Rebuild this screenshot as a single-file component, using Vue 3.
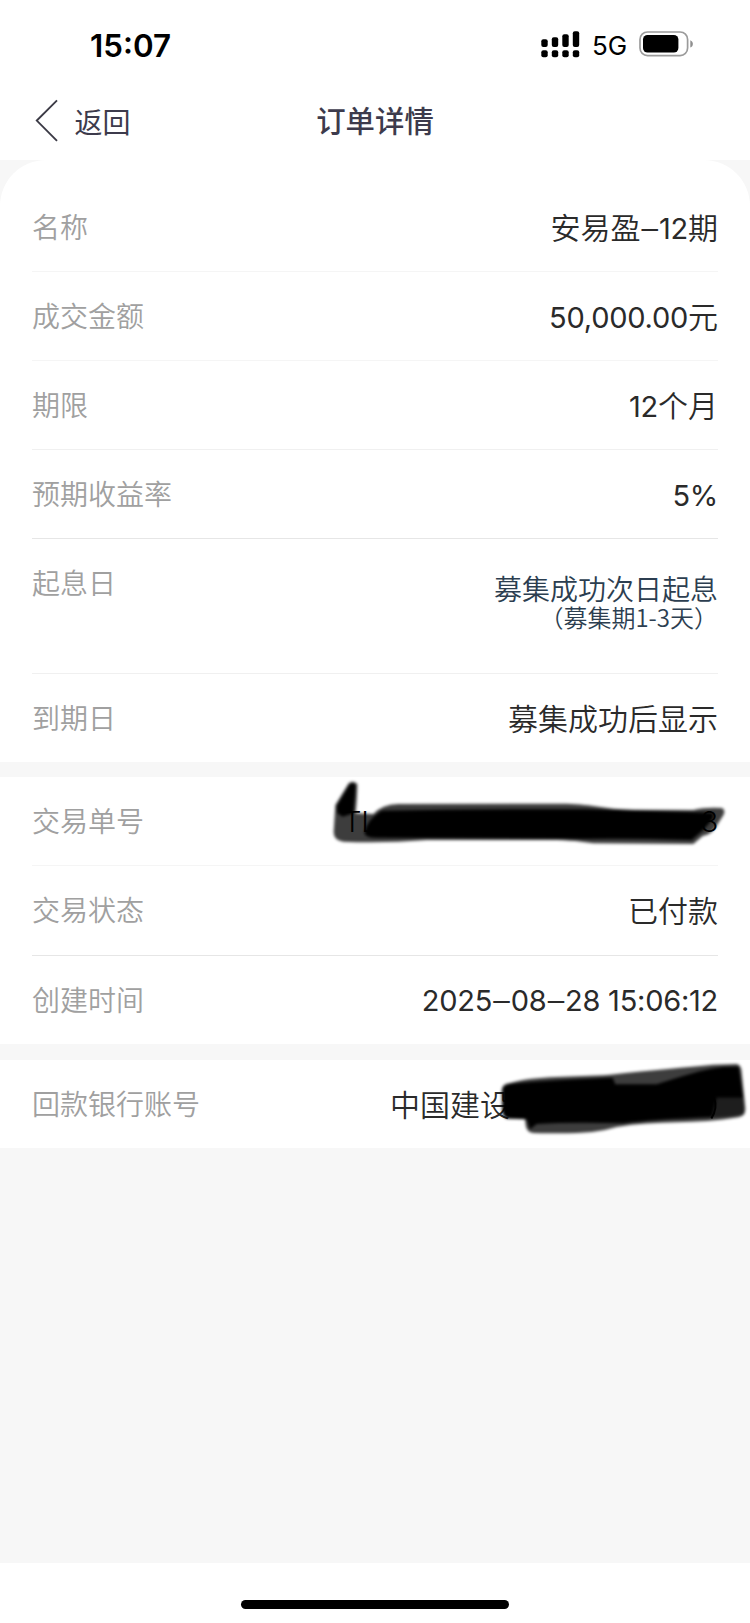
<script setup>
const product = [
  { label: '名称', parts: [{ t: '安易盈' }, { t: '–', n: true, dash: true }, { t: '12', n: true }, { t: '期' }], line: 'soft' },
  { label: '成交金额', parts: [{ t: '50,000.00', n: true }, { t: '元' }], line: 'soft' },
  { label: '期限', parts: [{ t: '12', n: true }, { t: '个月' }], line: 'mid' },
  { label: '预期收益率', parts: [{ t: '5%', n: true }], line: 'firm' },
  { label: '起息日', note: ['募集成功次日起息', '（募集期1-3天）'], line: 'mid' },
  { label: '到期日', parts: [{ t: '募集成功后显示' }], line: 'none' },
]
</script>

<template>
  <div class="page">
    <header class="top">
      <div class="status">
        <span class="time">15:07</span>
        <div class="indicators">
          <svg class="signal" width="39" height="27" viewBox="0 0 39 27">
            <rect x="0.3" y="8.3" width="6.4" height="7.7" rx="2" />
            <rect x="10.8" y="6.3" width="6.4" height="9.7" rx="2" />
            <rect x="21.3" y="3.3" width="6.4" height="12.7" rx="2" />
            <rect x="31.8" y="0.3" width="6.4" height="15.7" rx="2" />
            <rect x="0.3" y="19.3" width="6.4" height="7" rx="2" />
            <rect x="10.8" y="19.3" width="6.4" height="7" rx="2" />
            <rect x="21.3" y="19.3" width="6.4" height="7" rx="2" />
            <rect x="31.8" y="19.3" width="6.4" height="7" rx="2" />
          </svg>
          <span class="net">5G</span>
          <svg class="battery" width="55" height="26" viewBox="0 0 55 26">
            <rect x="1" y="1" width="47.6" height="23.6" rx="7.5" fill="none" stroke="#9b9b9b" stroke-width="1.7" />
            <rect x="4" y="4" width="35.4" height="17.6" rx="4.5" fill="#000" />
            <path d="M51.3 9.2C54.7 10.5 54.7 15.5 51.3 16.6Z" fill="#8f8f8f" />
          </svg>
        </div>
      </div>
      <nav class="nav">
        <div class="back">
          <svg width="24" height="44" viewBox="0 0 24 44">
            <path d="M22 1.4L1.8 21.6L22 41.8" fill="none" stroke="#3b3a45" stroke-width="1.9" />
          </svg>
          <span>返回</span>
        </div>
        <h1 class="title">订单详情</h1>
      </nav>
    </header>

    <main class="body">
      <section class="card first">
        <div v-for="row in product" :key="row.label" class="row" :class="[row.line, { tall: row.note }]">
          <span class="label">{{ row.label }}</span>
          <span v-if="row.note" class="note">
            <span>{{ row.note[0] }}</span>
            <small>{{ row.note[1] }}</small>
          </span>
          <span v-else class="value">
            <span v-for="p in row.parts" :key="p.t" :class="{ num: p.n, dash: p.dash }">{{ p.t }}</span>
          </span>
        </div>
      </section>

      <section class="card">
        <div class="row soft">
          <span class="label">交易单号</span>
          <span class="value hidden"><span class="num">TL</span><span class="num">8</span></span>
          <svg class="scribble order" width="440" height="110" viewBox="0 0 1320 330">
            <defs>
              <filter id="soft1" x="-5%" y="-20%" width="110%" height="140%"><feGaussianBlur stdDeviation="4.5" /></filter>
            </defs>
            <g filter="url(#soft1)">
              <path fill="#000" fill-opacity="0.76" d="M116 70Q128 60 142 72Q142 110 137 160L190 162Q215 134 265 132L770 131C850 133 880 147 970 149L1150 150Q1185 141 1236 144Q1248 150 1240 166L1215 205Q1200 225 1178 228L1150 252L850 250C800 242 760 240 700 240L350 240Q220 250 100 245Q70 240 71 215L76 135Z" />
              <path fill="#000" d="M118 74Q128 64 137 76Q134 120 130 160L98 170L82 160L80 138Z" />
              <path fill="#000" d="M215 152Q500 146 830 148L1210 158L1210 175L1180 210L1145 240Q950 235 830 237L200 233Q165 233 163 218Q170 180 215 152Z" />
            </g>
          </svg>
        </div>
        <div class="row firm state">
          <span class="label">交易状态</span>
          <span class="value">已付款</span>
        </div>
        <div class="row none">
          <span class="label">创建时间</span>
          <span class="value date"><span class="num">2025</span><span class="num dash">–</span><span class="num">08</span><span class="num dash">–</span><span class="num">28 15:06:12</span></span>
        </div>
      </section>

      <section class="card last">
        <div class="row none">
          <span class="label">回款银行账号</span>
          <span class="value bank">中国建设</span>
          <svg class="scribble account" width="380" height="130" viewBox="0 0 1140 390">
            <defs>
              <filter id="soft2" x="-5%" y="-20%" width="110%" height="140%"><feGaussianBlur stdDeviation="4.5" /></filter>
            </defs>
            <g filter="url(#soft2)">
              <path fill="#000" fill-opacity="0.76" d="M395 180Q395 162 420 159C500 135 610 142 720 134C850 120 950 112 1030 104L1100 102Q1113 104 1115 125L1126 235Q1127 258 1105 262C980 285 860 270 740 291C680 309 620 312 490 309Q469 306 467 285L465 268L410 266Q396 260 396 240Z" />
              <path fill="#000" d="M398 180Q400 163 425 161C520 152 620 148 728 143L736 163H860C940 138 990 120 1060 111L1106 110L1120 203H1040L1026 262Q850 268 760 280Q600 276 500 282L480 298L470 268L415 265Q398 260 398 240Z" />
              <path fill="#000" fill-opacity="0.5" d="M1036 203H1120L1123 252Q1080 262 1026 262Z" />
            </g>
            <path d="M1032 203Q1044 235 1024 265" fill="none" stroke="#000" stroke-width="6" />
          </svg>
        </div>
      </section>
    </main>

    <footer class="home"><i class="bar"></i></footer>
  </div>
</template>

<style>
body {
  margin: 0;
  background: #fff;
}
</style>

<style scoped>
.page {
  width: 750px;
  height: 1623px;
  display: flex;
  flex-direction: column;
  overflow: hidden;
  background: #fff;
  font-family: 'Noto Sans CJK SC', sans-serif;
}
.top {
  height: 160px;
  flex: none;
}
.status {
  height: 82px;
  display: flex;
  justify-content: space-between;
  align-items: flex-start;
  padding: 0 56px 0 90px;
  color: #000;
  font-family: Inter, sans-serif;
}
.time {
  margin-top: 26px;
  font-size: 31.3px;
  line-height: 40px;
  font-weight: 600;
}
.indicators {
  display: flex;
  align-items: flex-start;
}
.signal {
  margin-top: 31px;
}
.net {
  width: 47px;
  margin: 26px 0 0 12px;
  font-size: 26px;
  line-height: 40px;
  white-space: nowrap;
}
.battery {
  margin-top: 31px;
}
.nav {
  height: 78px;
  display: grid;
  grid-template-columns: 1fr auto 1fr;
  color: #3d3b4c;
}
.back {
  display: flex;
  align-items: flex-start;
  padding: 17px 0 0 35px;
  font-size: 28px;
  line-height: 44px;
}
.back span {
  margin-left: 15.5px;
}
.title {
  margin: 15px 0 0;
  font-size: 29.4px;
  line-height: 44px;
  font-weight: 500;
}
.body {
  flex: 1;
  display: flex;
  flex-direction: column;
  gap: 15px;
  background: #f7f7f7;
}
.card {
  background: #fff;
}
.first {
  padding-top: 23px;
  border-radius: 46px 46px 0 0;
}
.last {
  margin-top: 1px;
}
.row {
  position: relative;
  height: 89px;
  margin: 0 32px;
  box-sizing: border-box;
  display: flex;
  justify-content: space-between;
  border-bottom: 1px solid transparent;
  white-space: nowrap;
}
.row.tall {
  height: 135px;
}
.row.state {
  height: 90px;
}
.row.none {
  height: 88px;
}
.soft {
  border-color: #f5f5f5;
}
.mid {
  border-color: #f0f0f0;
}
.firm {
  border-color: #e6e6e6;
}
.label {
  font-size: 28px;
  line-height: 86px;
  color: #a0a0a0;
  font-weight: 350;
}
.value {
  font-size: 30px;
  line-height: 86px;
  color: #2a2a2a;
  font-weight: 350;
}
.num {
  font-family: Inter, sans-serif;
  font-size: 29px;
  font-weight: 400;
  letter-spacing: -0.25px;
}
.dash {
  padding: 0 1.2px;
  font-size: 33px;
  font-weight: 350;
  line-height: 1;
  vertical-align: -1px;
}
.date {
  line-height: 84px;
}
.hidden {
  width: 375px;
  display: flex;
  justify-content: space-between;
  color: #000;
  line-height: 90px;
}
.hidden .num {
  font-weight: 350;
}
.bank {
  width: 328px;
}
.note {
  display: flex;
  flex-direction: column;
  align-items: flex-end;
  padding-top: 34px;
  color: #2c3e50;
  font-size: 28px;
  line-height: 30px;
  font-weight: 350;
}
.note small {
  font-size: 24px;
  line-height: 28px;
}
.scribble {
  position: absolute;
}
.order {
  left: 278px;
  top: -17px;
}
.account {
  left: 338px;
  top: -30px;
}
.home {
  height: 60px;
  flex: none;
  display: flex;
  justify-content: center;
  align-items: flex-start;
}
.bar {
  width: 268px;
  height: 9px;
  margin-top: 37px;
  border-radius: 5px;
  background: #000;
}
</style>
